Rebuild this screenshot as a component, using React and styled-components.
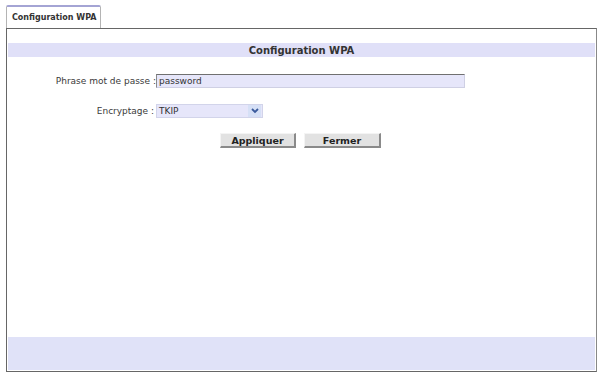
import React from 'react'
import styled, { createGlobalStyle } from 'styled-components';

const GlobalStyle = createGlobalStyle`
    html, body {
        margin: 0;
        padding: 0;
        background: #fff;
    }
    body {
        font-family: "DejaVu Sans", Verdana, sans-serif;
        color: #333;
    }
`;

const Page = styled.div`
    padding: 5px 4px 0 6px;
`;

const TabBar = styled.div`
    display: flex;
`;

const Tab = styled.div`
    height: 21px;
    padding: 0 4px 0 5px;
    display: flex;
    align-items: center;
    background: #fff;
    border: 1px solid #b4b4b4;
    border-top: 2px solid #a4a4d4;
    border-bottom: none;
    border-radius: 2px 2px 0 0;
    font-size: 8px;
    font-weight: bold;
    color: #333;
`;

const Panel = styled.div`
    height: 341px;
    border: 1px solid #666;
    border-right-color: #888;
    padding: 0 1px 1px 1px;
    display: flex;
    flex-direction: column;
    box-sizing: content-box;
`;

const HeaderBand = styled.div`
    margin-top: 14px;
    height: 14px;
    background: #e0e0f8;
    display: flex;
    align-items: center;
    justify-content: center;
    font-size: 10px;
    font-weight: bold;
    color: #333;
`;

const Form = styled.div`
    margin-top: 17px;
    display: grid;
    grid-template-columns: 148px 1fr;
    row-gap: 16px;
    align-items: center;
`;

const Label = styled.div`
    text-align: right;
    font-size: 9px;
    color: #3a3a3a;
    padding-right: ${p => p.$pad || 0}px;
`;

const TextField = styled.div`
    width: 305px;
    height: 12px;
    background: #e6e6fa;
    border: 1px solid #cfd0e4;
    border-top: 1px solid #707070;
    border-left: 1px solid #8a8a8a;
    font-size: 9px;
    line-height: 12px;
    padding-left: 2px;
    color: #333;
`;

const SelectBox = styled.div`
    width: 107px;
    height: 14px;
    background: #e6e6fa;
    border: 1px solid #d2d4ea;
    display: flex;
    align-items: center;
    justify-content: space-between;
    font-size: 9px;
    color: #333;
    padding-left: 2px;
    box-sizing: border-box;
`;

const ArrowBox = styled.div`
    width: 13px;
    height: 12px;
    margin-right: 1px;
    background: #d6e0f6;
    display: flex;
    align-items: center;
    justify-content: center;
`;

const Buttons = styled.div`
    margin-top: 15px;
    display: flex;
    justify-content: center;
    gap: 8px;
    padding-right: 2px;
`;

const Button = styled.button`
    width: ${p => p.$w}px;
    height: 15px;
    padding: 0;
    background: #e2e2e2;
    border: 1px solid #f4f4f4;
    border-right: 2px solid #8a8a8a;
    border-bottom: 2px solid #8a8a8a;
    font-family: "DejaVu Sans", Verdana, sans-serif;
    font-size: 9.5px;
    font-weight: bold;
    color: #222;
    cursor: pointer;
`;

const Spacer = styled.div`
    flex: 1;
`;

const FooterBand = styled.div`
    height: 33px;
    background: #e0e2f8;
`;

function App() {
    return (
        <Page>
            <GlobalStyle />
            <TabBar>
                <Tab>Configuration WPA</Tab>
            </TabBar>
            <Panel>
                <HeaderBand>Configuration WPA</HeaderBand>
                <Form>
                    <Label>Phrase mot de passe :</Label>
                    <TextField>password</TextField>
                    <Label $pad={2}>Encryptage :</Label>
                    <SelectBox>
                        TKIP
                        <ArrowBox>
                            <svg width="8" height="6" viewBox="0 0 8 6">
                                <path d="M1 1 L4 4 L7 1" fill="none" stroke="#3a5a9c" strokeWidth="1.8" />
                            </svg>
                        </ArrowBox>
                    </SelectBox>
                </Form>
                <Buttons>
                    <Button $w={76}>Appliquer</Button>
                    <Button $w={77}>Fermer</Button>
                </Buttons>
                <Spacer />
                <FooterBand />
            </Panel>
        </Page>
    )
}

export default App;
